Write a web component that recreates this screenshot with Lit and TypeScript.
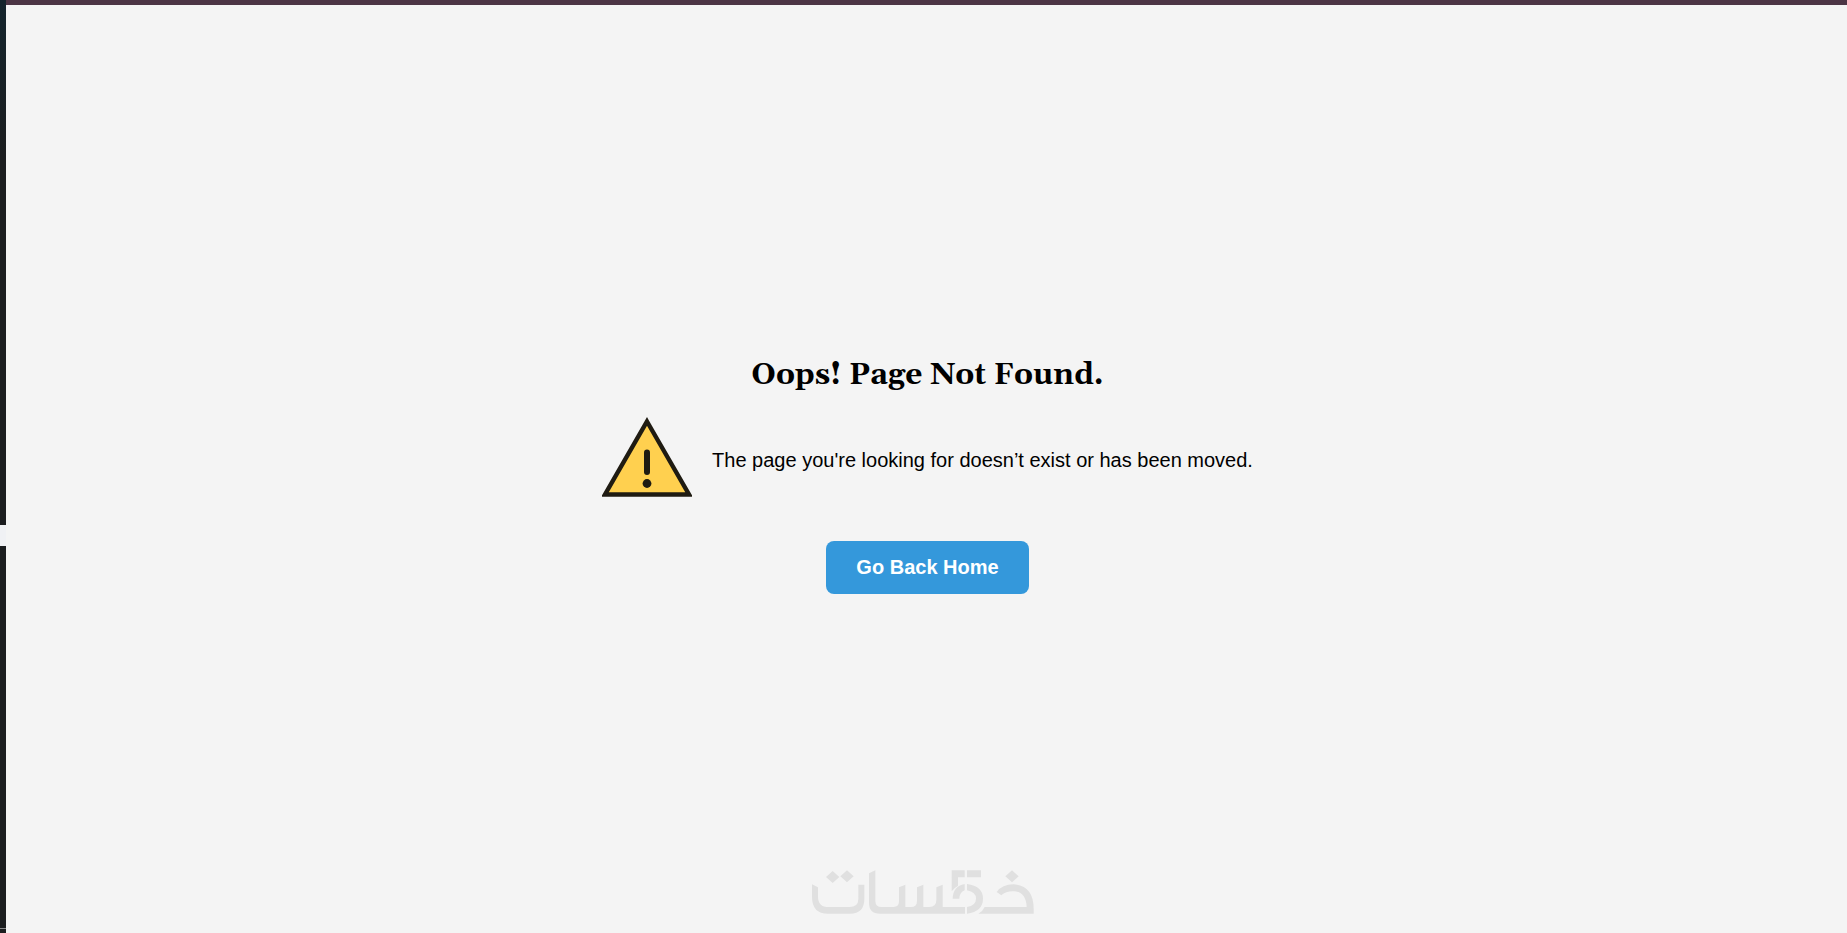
import { LitElement, html, css } from "lit";
import { customElement } from "lit/decorators.js";

@customElement("warning-icon")
class WarningIcon extends LitElement {
  static styles = css`
    :host { display: block; flex: none; }
    svg { display: block; width: 90px; height: 90px; }
  `;
  render() {
    return html`
      <svg viewBox="0 0 90 90" role="img" aria-label="Warning">
        <path d="M45 6.500 87 79.500H3Z" fill="#ffd04f" stroke="#1f1b12" stroke-width="4.400" stroke-miterlimit="10" />
        <path d="M45 37.500V57" stroke="#1f1b12" stroke-width="6" stroke-linecap="round" />
        <circle cx="45" cy="68.500" r="4.400" fill="#1f1b12" />
      </svg>
    `;
  }
}

@customElement("brand-mark")
class BrandMark extends LitElement {
  static styles = css`
    :host { display: block; }
    svg { display: block; width: 224px; height: 46px; }
  `;
  render() {
    return html`
      <svg viewBox="33 25 672 138" role="img" aria-label="خمسات">
        <g fill="#e0e0e0">
          <path d="M98 31 118 49 98 67 78 49ZM141 29 161 47 141 65 121 47ZM636 29 656 47 636 65 616 47Z" />
          <path d="M36 71 54 80V108Q54 139 86 139H148Q175 139 175 115V72H193V115Q193 159 150 159H84Q36 159 36 108Z" />
          <path d="M207 38 226 29V120Q226 139 245 139H281Q297 139 297 122V80L316 72V139H333Q351 139 351 120V80L370 72V139H388Q409 139 409 118V80L428 72V139H495V159H240Q207 159 207 126Z" />
          <path d="M455 29H494V50H474V75Q462 82 455 92Z" />
          <path d="M494 70V89Q479 94 478 114H458Q459 76 494 70Z" />
          <path d="M501 29H543V50H501ZM501 70Q549 76 549 114 549 152 501 159V139Q528 134 528 114 528 94 501 89Z" />
          <path d="M590 94Q607 71 640 71 701 75 701 145V159H535Q549 151 554 139H680Q678 94 642 92 618 91 604 104Z" />
        </g>
      </svg>
    `;
  }
}

@customElement("app-root")
class AppRoot extends LitElement {
  static styles = css`
    :host {
      display: flex;
      position: relative;
      min-height: 100vh;
      background: #f4f4f4;
      color: #000;
      font-family: "Liberation Sans", Arial, sans-serif;
      font-size: 20px;
      line-height: 24px;
    }
    .edge { display: flex; flex-direction: column; width: 6px; flex: none; background: #f0f1f4; gap: 21px; }
    .edge-top { flex: 525; background: linear-gradient(#14242d, #1b1d1f 30%); }
    .edge-bottom { flex: 387; display: flex; flex-direction: column; justify-content: flex-end; background: #1b1d1f; }
    .edge-line { height: 1px; margin-bottom: 4px; background: #8a8b8d; }
    .page { flex: 1; display: flex; flex-direction: column; border-top: 5px solid #4c3545; }
    main { flex: 1; display: flex; flex-direction: column; align-items: center; justify-content: center; padding: 10px 0 0 2px; }
    h1 { margin: 0 0 20px; font: bold 30px/40px Georgia, Gelasio, "Liberation Serif", serif; }
    .message { display: flex; align-items: center; gap: 20px; margin-bottom: 36px; }
    p { margin: 0; }
    .home { padding: 14px 30px; border-radius: 8px; background: #3498db; color: #fff; font-weight: bold; line-height: 25px; text-decoration: none; }
    .watermark { position: absolute; left: 0; right: 2px; bottom: 18px; display: flex; justify-content: center; pointer-events: none; }
  `;
  render() {
    return html`
      <div class="edge">
        <div class="edge-top"></div>
        <div class="edge-bottom"><div class="edge-line"></div></div>
      </div>
      <div class="page">
        <main>
          <h1>Oops! Page Not Found.</h1>
          <div class="message">
            <warning-icon></warning-icon>
            <p>The page you're looking for doesn’t exist or has been moved.</p>
          </div>
          <a class="home" href="/">Go Back Home</a>
        </main>
      </div>
      <div class="watermark"><brand-mark></brand-mark></div>
    `;
  }
}
